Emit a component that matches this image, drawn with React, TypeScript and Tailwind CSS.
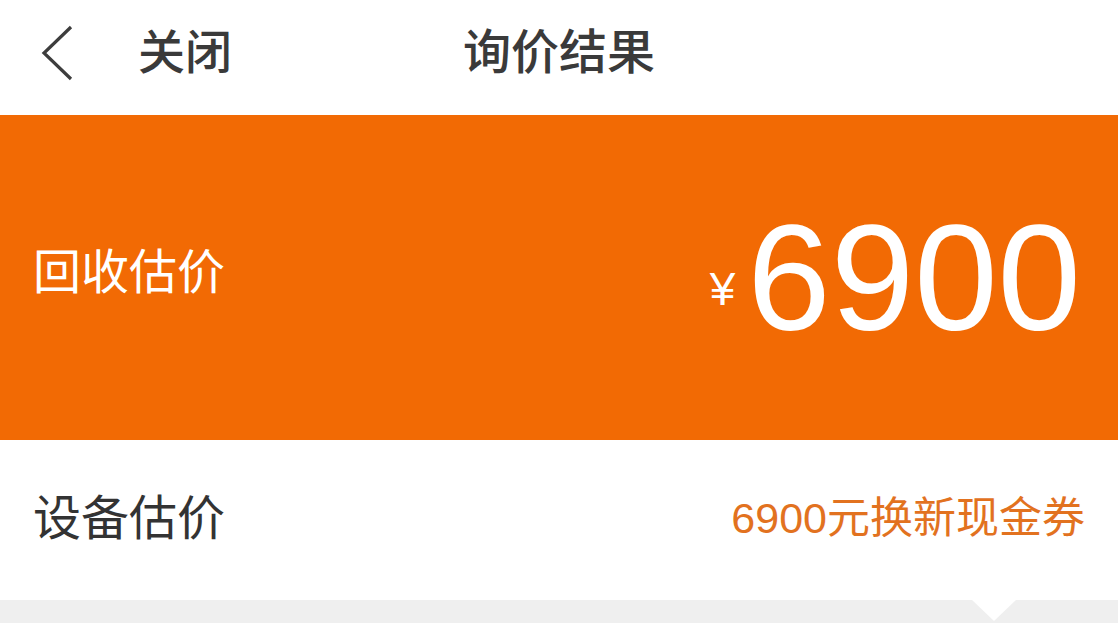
export default function App() {
  return (
    <div
      className="w-[1118px] h-[640px] overflow-hidden bg-white"
      style={{ fontFamily: '"Liberation Sans", "Noto Sans CJK SC", sans-serif' }}
    >
      {/* top bar */}
      <div className="relative h-[115px] flex items-center pb-[10px]">
        <div className="flex items-center pl-[40px]">
          <svg width="36" height="56" viewBox="0 0 36 56" fill="none">
            <path d="M31 2 L4 28 L31 54" stroke="#3d3d3d" strokeWidth="3.2" strokeLinejoin="miter" />
          </svg>
          <span className="ml-[62px] text-[47px] font-medium text-[#3a3a3a] leading-none">关闭</span>
        </div>
        <div className="absolute inset-0 pb-[10px] flex items-center justify-center pointer-events-none">
          <span className="text-[48px] font-medium text-[#3a3a3a] leading-none">询价结果</span>
        </div>
      </div>

      {/* estimate banner */}
      <div className="h-[325px] bg-[#f26a04] flex items-center justify-between px-[33px]">
        <span className="text-[48px] text-white leading-none mt-[-10px]">回收估价</span>
        <div className="flex items-center text-white mr-[4px]">
          <span className="text-[46px] leading-none mr-[12px] mt-[22px]">¥</span>
          <span className="text-[150px] leading-none">6900</span>
        </div>
      </div>

      {/* device estimate row */}
      <div className="h-[160px] flex items-center justify-between px-[33px]">
        <span className="text-[48px] text-[#333333] leading-none mt-[-2px]">设备估价</span>
        <span className="text-[43px] text-[#e2721f] leading-none mt-[-4px]">6900元换新现金券</span>
      </div>

      {/* divider strip with notch */}
      <div className="relative h-[23px] bg-[#efefef]">
        <svg className="absolute top-0 left-[972px]" width="44" height="21" viewBox="0 0 44 21">
          <path d="M0 0 L44 0 L22 21 Z" fill="#ffffff" />
        </svg>
      </div>
      <div className="h-[17px] bg-white" />
    </div>
  );
}
